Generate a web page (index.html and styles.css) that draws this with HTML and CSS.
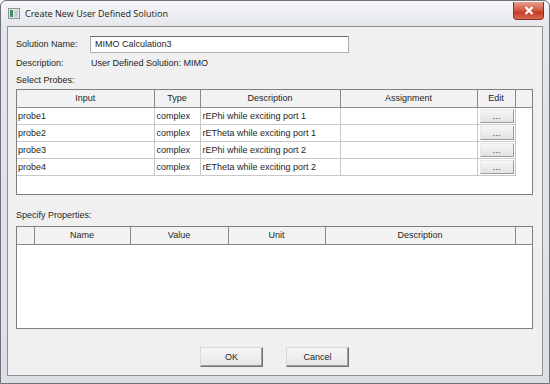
FILE: index.html
```html
<!DOCTYPE html>
<html lang="en">
<head>
    <meta charset="UTF-8">
    <title>Create New User Defined Solution</title>
    <link rel="stylesheet" href="styles.css">
</head>
<body>
    <div class="window">
        <div class="titlebar">
            <svg class="app-icon" width="12" height="11" viewBox="0 0 12 11">
                <rect x="0.5" y="0.5" width="11" height="10" fill="#e9ecef" stroke="#8a9098"/>
                <rect x="2" y="2" width="3" height="7" fill="#3f8f5a"/>
                <rect x="6" y="2" width="4" height="7" fill="#c9ced4"/>
            </svg>
            <span class="title">Create New User Defined Solution</span>
            <div class="close">
                <svg width="10" height="9" viewBox="0 0 10 9">
                    <path d="M1.5 1 L8.5 8 M8.5 1 L1.5 8" stroke="#fff" stroke-width="2.2"/>
                </svg>
            </div>
        </div>
        <div class="client">
            <div class="field">
                <span class="label">Solution Name:</span>
                <div class="textbox">MIMO Calculation3</div>
            </div>
            <div class="field desc">
                <span class="label">Description:</span>
                <span class="value">User Defined Solution: MIMO</span>
            </div>
            <p class="section">Select Probes:</p>
            <div class="grid probes">
                <table>
                    <colgroup>
                        <col style="width:137px">
                        <col style="width:46px">
                        <col style="width:140px">
                        <col style="width:137px">
                        <col style="width:38px">
                        <col>
                    </colgroup>
                    <tr class="head">
                        <th>Input</th><th>Type</th><th>Description</th><th>Assignment</th><th>Edit</th><th class="filler"></th>
                    </tr>
                    <tr>
                        <td>probe1</td><td>complex</td><td>rEPhi while exciting port 1</td><td></td><td class="edit"><button>...</button></td><td class="blank"></td>
                    </tr>
                    <tr>
                        <td>probe2</td><td>complex</td><td>rETheta while exciting port 1</td><td></td><td class="edit"><button>...</button></td><td class="blank"></td>
                    </tr>
                    <tr>
                        <td>probe3</td><td>complex</td><td>rEPhi while exciting port 2</td><td></td><td class="edit"><button>...</button></td><td class="blank"></td>
                    </tr>
                    <tr>
                        <td>probe4</td><td>complex</td><td>rETheta while exciting port 2</td><td></td><td class="edit"><button>...</button></td><td class="blank"></td>
                    </tr>
                </table>
            </div>
            <p class="section props">Specify Properties:</p>
            <div class="grid properties">
                <table>
                    <colgroup>
                        <col style="width:17px">
                        <col style="width:96px">
                        <col style="width:98px">
                        <col style="width:97px">
                        <col style="width:190px">
                        <col>
                    </colgroup>
                    <tr class="head">
                        <th></th><th>Name</th><th>Value</th><th>Unit</th><th>Description</th><th class="filler"></th>
                    </tr>
                </table>
            </div>
            <div class="buttons">
                <button class="btn">OK</button>
                <button class="btn">Cancel</button>
            </div>
        </div>
    </div>
</body>
</html>
```

FILE: styles.css
```css
* {
    margin: 0;
    padding: 0;
    box-sizing: border-box;
}
body {
    font-family: "Liberation Sans", Arial, sans-serif;
    font-size: 9px;
    color: #1e1e1e;
    background: #ffffff;
}
.window {
    width: 550px;
    height: 384px;
    border: 1px solid #6f7277;
    border-radius: 6px 6px 0 0;
    background: linear-gradient(#f4f5f7, #e3e6ea 30px, #dcdfe3);
    display: flex;
    flex-direction: column;
}
.titlebar {
    height: 25px;
    display: flex;
    align-items: center;
    padding-left: 7px;
}
.app-icon {
    margin-right: 5px;
}
.title {
    font-family: "Open Sans", "Liberation Sans", sans-serif;
    font-size: 9px;
    color: #202020;
    flex: 1;
    margin-top: -1px;
}
.close {
    width: 31px;
    height: 18px;
    margin: -6px 5px 0 0;
    border: 1px solid #8b2f25;
    border-top: none;
    border-radius: 0 0 4px 4px;
    background: linear-gradient(#e9a08f, #d2553f 50%, #c33b25 60%, #d86b50);
    display: flex;
    align-items: center;
    justify-content: center;
}
.client {
    flex: 1;
    margin: 0 6px 7px 6px;
    border: 1px solid #8e9196;
    background: #f0f0f0;
    padding: 8px 9px 0 8px;
    display: flex;
    flex-direction: column;
}
.field {
    display: flex;
    align-items: center;
    height: 18px;
}
.label {
    width: 74px;
}
.textbox {
    width: 259px;
    height: 17px;
    border: 1px solid #abadb3;
    border-top-color: #6d6d6d;
    background: #ffffff;
    padding: 2px 0 0 4px;
}
.desc {
    margin-top: 3px;
    height: 14px;
}
.desc .value {
    margin-left: 1px;
}
.section {
    margin-top: 3px;
    height: 15px;
    line-height: 15px;
}
.section.props {
    margin-top: 15px;
    height: 15px;
    line-height: 11px;
}
.grid {
    width: 517px;
    border: 1px solid #7f7f7f;
    background: #ffffff;
    margin-top: 1px;
}
.probes {
    height: 106px;
}
.properties {
    height: 103px;
}
table {
    width: 100%;
    table-layout: fixed;
    border-collapse: collapse;
}
th {
    height: 17px;
    font-weight: normal;
    background: #f2f2f2;
    border: 1px solid #8a8a8a;
    border-top: none;
    text-align: center;
}
th:first-child {
    border-left: none;
}
th.filler {
    border-right: none;
}
td {
    height: 17px;
    border: 1px solid #c8c8c8;
    padding-left: 2px;
    white-space: nowrap;
    overflow: hidden;
}
td:first-child {
    border-left: none;
    padding-left: 1px;
}
td.blank {
    border: none;
    border-left: 1px solid #c8c8c8;
}
td.edit {
    padding: 0 1px 0 2px;
}
td.edit button {
    width: 34px;
    height: 14px;
    display: block;
    font-family: inherit;
    font-size: 9px;
    color: #333;
    line-height: 8px;
    border: 1px solid #9a9a9a;
    border-top-color: #e8e8e8;
    border-left-color: #e8e8e8;
    background: linear-gradient(#f6f6f6, #e2e2e2);
}
.buttons {
    display: flex;
    justify-content: center;
    gap: 23px;
    margin-top: 18px;
}
.btn {
    width: 63px;
    height: 20px;
    font-family: inherit;
    font-size: 9px;
    color: #1e1e1e;
    background: linear-gradient(#f6f6f6, #e6e6e6);
    border: 1px solid #707070;
    border-top-color: #d8d8d8;
    border-left-color: #d8d8d8;
    box-shadow: inset -1px -1px 0 #a0a0a0;
}
```
